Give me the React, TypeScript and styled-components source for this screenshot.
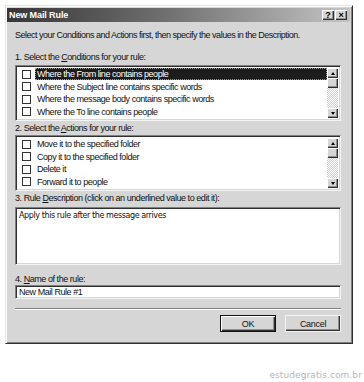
import React, { FunctionComponent } from 'react';
import styled, { createGlobalStyle } from 'styled-components';

const GlobalStyle = createGlobalStyle`
    html, body {
        margin: 0;
        padding: 0;
        background: #ffffff;
    }
    body {
        width: 364px;
        height: 382px;
        overflow: hidden;
        font-family: "Liberation Sans", Arial, sans-serif;
    }
`;

const Page = styled.div`
    display: flex;
    flex-direction: column;
    padding: 5px 0 0 5px;
    height: 382px;
    box-sizing: border-box;
`;

const Window = styled.div`
    width: 348px;
    background-color: #d6d6d6;
    border-top: 1px solid #e4e4e4;
    border-left: 1px solid #e4e4e4;
    border-right: 1px solid #303030;
    border-bottom: 1px solid #303030;
    box-shadow: inset 1px 1px 0 #ffffff, inset -1px -1px 0 #808080;
    padding: 2px 2px 0 1px;
    box-sizing: border-box;
    display: flex;
    flex-direction: column;
`;

const TitleBar = styled.div`
    height: 14px;
    background: linear-gradient(90deg, #363636 0%, #6e6e6e 45%, #c4c4c4 100%);
    display: flex;
    align-items: center;
    justify-content: space-between;
    padding: 0 3px 0 2px;
    color: #ffffff;
    font-weight: bold;
    font-size: 9px;
    letter-spacing: -0.1px;
`;

const TitleButtons = styled.div`
    display: flex;
    gap: 1px;
`;

const TitleButton = styled.div`
    width: 12px;
    height: 10px;
    background: #d6d6d6;
    box-shadow: inset 1px 1px 0 #ffffff, inset -1px -1px 0 #303030, inset -2px -2px 0 #909090;
    color: #000000;
    font-size: 9px;
    font-weight: bold;
    line-height: 10px;
    text-align: center;
`;

const Body = styled.div`
    display: flex;
    flex-direction: column;
    padding: 0 9px 11px 8px;
    font-size: 9px;
    letter-spacing: -0.45px;
    color: #111111;
`;

const Label = styled.div<{ $top: number }>`
    height: 11px;
    line-height: 11px;
    margin-top: ${(p) => p.$top}px;
    white-space: nowrap;
    u {
        text-decoration: underline;
    }
`;

const Intro = styled(Label)`
    letter-spacing: -0.5px;
`;

const Sunken = styled.div<{ $height: number; $top: number }>`
    height: ${(p) => p.$height}px;
    margin-top: ${(p) => p.$top}px;
    background: #ffffff;
    border-top: 1px solid #808080;
    border-left: 1px solid #808080;
    border-right: 1px solid #f4f4f4;
    border-bottom: 1px solid #f4f4f4;
    box-shadow: inset 1px 1px 0 #303030, inset -1px -1px 0 #d6d6d6;
    box-sizing: border-box;
    display: flex;
    padding: 2px;
`;

const Rows = styled.div`
    flex: 1;
    display: flex;
    flex-direction: column;
`;

const Row = styled.div`
    height: 13px;
    display: flex;
    align-items: center;
    padding-left: 4px;
    white-space: nowrap;
`;

const Check = styled.span`
    width: 7px;
    height: 7px;
    border: 1px solid #333333;
    background: #ffffff;
    flex-shrink: 0;
    margin-right: 4px;
`;

const RowText = styled.span<{ $selected?: boolean }>`
    flex: 1;
    height: 12px;
    line-height: 12px;
    padding-left: 2px;
    background: ${(p) => (p.$selected ? '#1c1c1c' : 'transparent')};
    color: ${(p) => (p.$selected ? '#ffffff' : '#111111')};
    outline: ${(p) => (p.$selected ? '1px dotted #9a9a9a' : 'none')};
    outline-offset: -1px;
`;

const ScrollBar = styled.div`
    width: 11px;
    display: flex;
    flex-direction: column;
    background-color: #e6e6e6;
    background-image: repeating-conic-gradient(#ffffff 0% 25%, #cfcfcf 0% 50%);
    background-size: 2px 2px;
`;

const ScrollButton = styled.div`
    height: 10px;
    flex-shrink: 0;
    background: #d6d6d6;
    box-shadow: inset 1px 1px 0 #ffffff, inset -1px -1px 0 #303030, inset -2px -2px 0 #909090;
    display: flex;
    align-items: center;
    justify-content: center;
`;

const Track = styled.div`
    flex: 1;
`;

const Arrow = styled.span<{ $down?: boolean }>`
    width: 0;
    height: 0;
    border-left: 2.5px solid transparent;
    border-right: 2.5px solid transparent;
    ${(p) => (p.$down ? 'border-top: 3px solid #000;' : 'border-bottom: 3px solid #000;')}
`;

const DescText = styled.div`
    padding: 1px 0 0 1px;
    font-family: "DejaVu Sans", Verdana, sans-serif;
    font-size: 8px;
    letter-spacing: -0.4px;
    color: #111111;
`;

const InputText = styled.div`
    padding-left: 1px;
    line-height: 9px;
    color: #111111;
`;

const Separator = styled.div`
    margin-top: 9px;
    height: 1px;
    background: #808080;
    border-bottom: 1px solid #ffffff;
`;

const ButtonRow = styled.div`
    margin-top: 5px;
    display: flex;
    justify-content: flex-end;
    gap: 9px;
`;

const Button = styled.div<{ $default?: boolean }>`
    width: 56px;
    height: 17px;
    box-sizing: border-box;
    background: #d6d6d6;
    border: 1px solid ${(p) => (p.$default ? '#111111' : '#f4f4f4')};
    box-shadow: ${(p) =>
        p.$default
            ? 'inset 1px 1px 0 #ffffff, inset -1px -1px 0 #303030, inset -2px -2px 0 #909090'
            : 'inset -1px -1px 0 #303030, inset -2px -2px 0 #909090'};
    display: flex;
    align-items: center;
    justify-content: center;
    font-size: 9px;
    letter-spacing: -0.3px;
    color: #111111;
`;

const Watermark = styled.div`
    align-self: flex-end;
    margin-top: 26px;
    padding-right: 2px;
    font-family: "DejaVu Sans", Verdana, sans-serif;
    font-size: 9px;
    letter-spacing: 0.1px;
    color: #b4b4c4;
`;

const conditions = [
    'Where the From line contains people',
    'Where the Subject line contains specific words',
    'Where the message body contains specific words',
    'Where the To line contains people',
];

const actions = [
    'Move it to the specified folder',
    'Copy it to the specified folder',
    'Delete it',
    'Forward it to people',
];

interface ListProps {
    items: string[];
    top: number;
    selected?: number;
}

const CheckList: FunctionComponent<ListProps> = ({ items, top, selected }) => (
    <Sunken $height={56} $top={top}>
        <Rows>
            {items.map((item, i) => (
                <Row key={item}>
                    <Check />
                    <RowText $selected={i === selected}>{item}</RowText>
                </Row>
            ))}
        </Rows>
        <ScrollBar>
            <ScrollButton>
                <Arrow />
            </ScrollButton>
            <ScrollButton />
            <Track />
            <ScrollButton>
                <Arrow $down />
            </ScrollButton>
        </ScrollBar>
    </Sunken>
);

const App: FunctionComponent = () => {
    return (
        <>
            <GlobalStyle />
            <Page>
                <Window>
                    <TitleBar>
                        <span>New Mail Rule</span>
                        <TitleButtons>
                            <TitleButton>?</TitleButton>
                            <TitleButton>×</TitleButton>
                        </TitleButtons>
                    </TitleBar>
                    <Body>
                        <Intro $top={8}>
                            Select your Conditions and Actions first, then specify the values in the Description.
                        </Intro>
                        <Label $top={11}>
                            1. Select the <u>C</u>onditions for your rule:
                        </Label>
                        <CheckList items={conditions} top={2} selected={0} />
                        <Label $top={2}>
                            2. Select the <u>A</u>ctions for your rule:
                        </Label>
                        <CheckList items={actions} top={1} />
                        <Label $top={2}>
                            3. Rule <u>D</u>escription (click on an underlined value to edit it):
                        </Label>
                        <Sunken $height={58} $top={3}>
                            <DescText>Apply this rule after the message arrives</DescText>
                        </Sunken>
                        <Label $top={9}>
                            4. <u>N</u>ame of the rule:
                        </Label>
                        <Sunken $height={14} $top={0}>
                            <InputText>New Mail Rule #1</InputText>
                        </Sunken>
                        <Separator />
                        <ButtonRow>
                            <Button $default>OK</Button>
                            <Button>Cancel</Button>
                        </ButtonRow>
                    </Body>
                </Window>
                <Watermark>estudegratis.com.br</Watermark>
            </Page>
        </>
    );
};

export default App;
